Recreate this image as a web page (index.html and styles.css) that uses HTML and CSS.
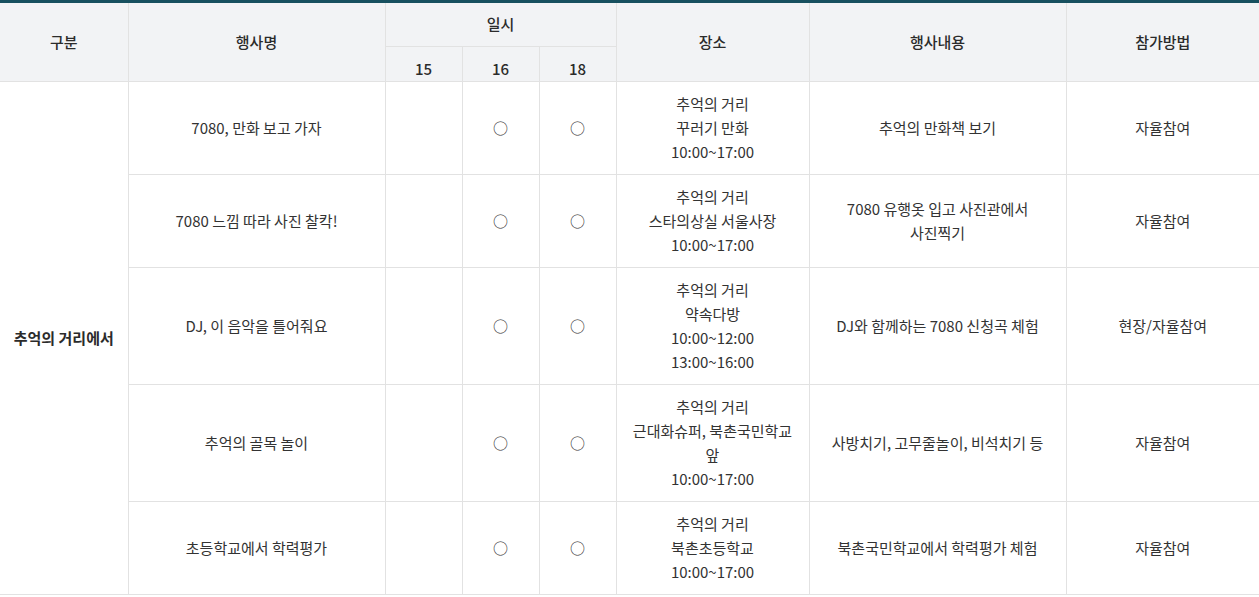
FILE: index.html
```html
<!DOCTYPE html>
<html>
<head>
<meta charset="utf-8">
<title>행사 일정</title>
<link rel="stylesheet" href="styles.css">
</head>
<body>
<div class="table-wrap">
  <table class="event-table">
    <colgroup>
      <col class="c-cat">
      <col class="c-name">
      <col class="c-day">
      <col class="c-day">
      <col class="c-day">
      <col class="c-place">
      <col class="c-desc">
      <col class="c-method">
    </colgroup>
    <thead>
      <tr class="head-top">
        <th rowspan="2">구분</th>
        <th rowspan="2">행사명</th>
        <th colspan="3">일시</th>
        <th rowspan="2">장소</th>
        <th rowspan="2">행사내용</th>
        <th rowspan="2">참가방법</th>
      </tr>
      <tr class="head-sub">
        <th>15</th>
        <th>16</th>
        <th>18</th>
      </tr>
    </thead>
    <tbody>
      <tr>
        <td rowspan="5" class="cat">추억의 거리에서</td>
        <td>7080, 만화 보고 가자</td>
        <td></td>
        <td>○</td>
        <td>○</td>
        <td>추억의 거리<br>꾸러기 만화<br>10:00~17:00</td>
        <td>추억의 만화책 보기</td>
        <td class="last">자율참여</td>
      </tr>
      <tr>
        <td>7080 느낌 따라 사진 찰칵!</td>
        <td></td>
        <td>○</td>
        <td>○</td>
        <td>추억의 거리<br>스타의상실 서울사장<br>10:00~17:00</td>
        <td>7080 유행옷 입고 사진관에서 사진찍기</td>
        <td class="last">자율참여</td>
      </tr>
      <tr>
        <td>DJ, 이 음악을 틀어줘요</td>
        <td></td>
        <td>○</td>
        <td>○</td>
        <td>추억의 거리<br>약속다방<br>10:00~12:00<br>13:00~16:00</td>
        <td>DJ와 함께하는 7080 신청곡 체험</td>
        <td class="last">현장/자율참여</td>
      </tr>
      <tr>
        <td>추억의 골목 놀이</td>
        <td></td>
        <td>○</td>
        <td>○</td>
        <td>추억의 거리<br>근대화슈퍼, 북촌국민학교 앞<br>10:00~17:00</td>
        <td>사방치기, 고무줄놀이, 비석치기 등</td>
        <td class="last">자율참여</td>
      </tr>
      <tr>
        <td>초등학교에서 학력평가</td>
        <td></td>
        <td>○</td>
        <td>○</td>
        <td>추억의 거리<br>북촌초등학교<br>10:00~17:00</td>
        <td>북촌국민학교에서 학력평가 체험</td>
        <td class="last">자율참여</td>
      </tr>
    </tbody>
  </table>
</div>
</body>
</html>
```
FILE: styles.css
```css
html, body {
  margin: 0;
  padding: 0;
  background: #ffffff;
}

body {
  font-family: "Noto Sans CJK KR", "Noto Sans", sans-serif;
  font-size: 15px;
  line-height: 24px;
  color: #333333;
  text-autospace: no-autospace;
}

.table-wrap {
  width: 1259px;
  border-top: 3px solid #17505f;
  overflow: hidden;
}

.event-table {
  width: 1259px;
  table-layout: fixed;
  border-collapse: collapse;
  border-spacing: 0;
  word-break: keep-all;
}

.c-cat { width: 128px; }
.c-name { width: 257px; }
.c-day { width: 77px; }
.c-place { width: 193px; }
.c-desc { width: 257px; }
.c-method { width: 193px; }

.event-table th,
.event-table td {
  border: 1px solid #e2e2e2;
  text-align: center;
  vertical-align: middle;
}

.event-table th {
  background: #f2f3f5;
  font-weight: 500;
  color: #2b2b2b;
}

.event-table tr:first-child th {
  border-top: 0;
}

.event-table th:first-child,
.event-table td.cat {
  border-left: 0;
}

.event-table th:last-child,
.event-table td.last {
  border-right: 0;
}

.head-top th {
  padding: 9px 0 10px;
}

.head-sub th {
  padding: 10px 0 0;
}

.event-table td {
  padding: 10px 10px;
  color: #333333;
}

.event-table td.cat {
  font-weight: 700;
  color: #2b2b2b;
  padding: 10px 4px;
}
```
